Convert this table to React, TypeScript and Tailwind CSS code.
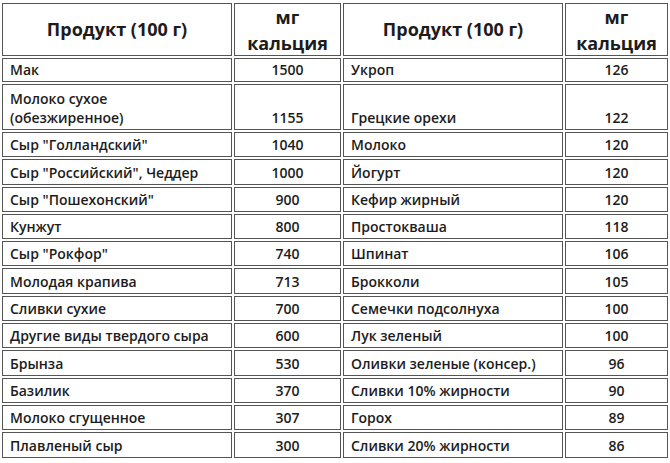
import React from "react";

type Row = { left: React.ReactNode; lval: string; right: string; rval: string; tall?: boolean };

const rows: Row[] = [
  { left: "Мак", lval: "1500", right: "Укроп", rval: "126" },
  {
    left: (
      <span>
        Молоко сухое
        <br />
        (обезжиренное)
      </span>
    ),
    lval: "1155",
    right: "Грецкие орехи",
    rval: "122",
    tall: true,
  },
  { left: "Сыр \"Голландский\"", lval: "1040", right: "Молоко", rval: "120" },
  { left: "Сыр \"Российский\", Чеддер", lval: "1000", right: "Йогурт", rval: "120" },
  { left: "Сыр \"Пошехонский\"", lval: "900", right: "Кефир жирный", rval: "120" },
  { left: "Кунжут", lval: "800", right: "Простокваша", rval: "118" },
  { left: "Сыр \"Рокфор\"", lval: "740", right: "Шпинат", rval: "106" },
  { left: "Молодая крапива", lval: "713", right: "Брокколи", rval: "105" },
  { left: "Сливки сухие", lval: "700", right: "Семечки подсолнуха", rval: "100" },
  { left: "Другие виды твердого сыра", lval: "600", right: "Лук зеленый", rval: "100" },
  { left: "Брынза", lval: "530", right: "Оливки зеленые (консер.)", rval: "96" },
  { left: "Базилик", lval: "370", right: "Сливки 10% жирности", rval: "90" },
  { left: "Молоко сгущенное", lval: "307", right: "Горох", rval: "89" },
  { left: "Плавленый сыр", lval: "300", right: "Сливки 20% жирности", rval: "86" },
];

const cell = "border border-[#555] bg-white flex";

function Header() {
  return (
    <>
      <div className={`${cell} h-[53px] items-center justify-center text-[18px] font-bold`}>Продукт (100 г)</div>
      <div className={`${cell} h-[53px] flex-col items-center justify-center text-[18px] leading-[26px] font-bold`}>
        <span>мг</span>
        <span>кальция</span>
      </div>
    </>
  );
}

export default function App() {
  return (
    <div className="w-[670px] h-[463px] overflow-hidden bg-white pl-[2px] pt-[3px] text-[#1c1c1c] font-semibold [font-family:'Open_Sans',sans-serif]">
      <div className="grid grid-cols-[230px_107px_220px_103px] gap-[2px] text-[14px]">
        <Header />
        <Header />
        {rows.map((r, i) => {
          const h = i === 0 ? "h-[24px]" : r.tall ? "h-[46px]" : "h-[25.3px]";
          return (
            <React.Fragment key={i}>
              <div className={`${cell} ${h} items-end pl-[7px] pb-[2px] leading-[19px]`}>{r.left}</div>
              <div className={`${cell} ${h} items-end justify-center pb-[2px] leading-[19px]`}>{r.lval}</div>
              <div className={`${cell} ${h} items-end pl-[7px] pb-[2px] leading-[19px]`}>{r.right}</div>
              <div className={`${cell} ${h} items-end justify-center pb-[2px] leading-[19px]`}>{r.rval}</div>
            </React.Fragment>
          );
        })}
      </div>
    </div>
  );
}
